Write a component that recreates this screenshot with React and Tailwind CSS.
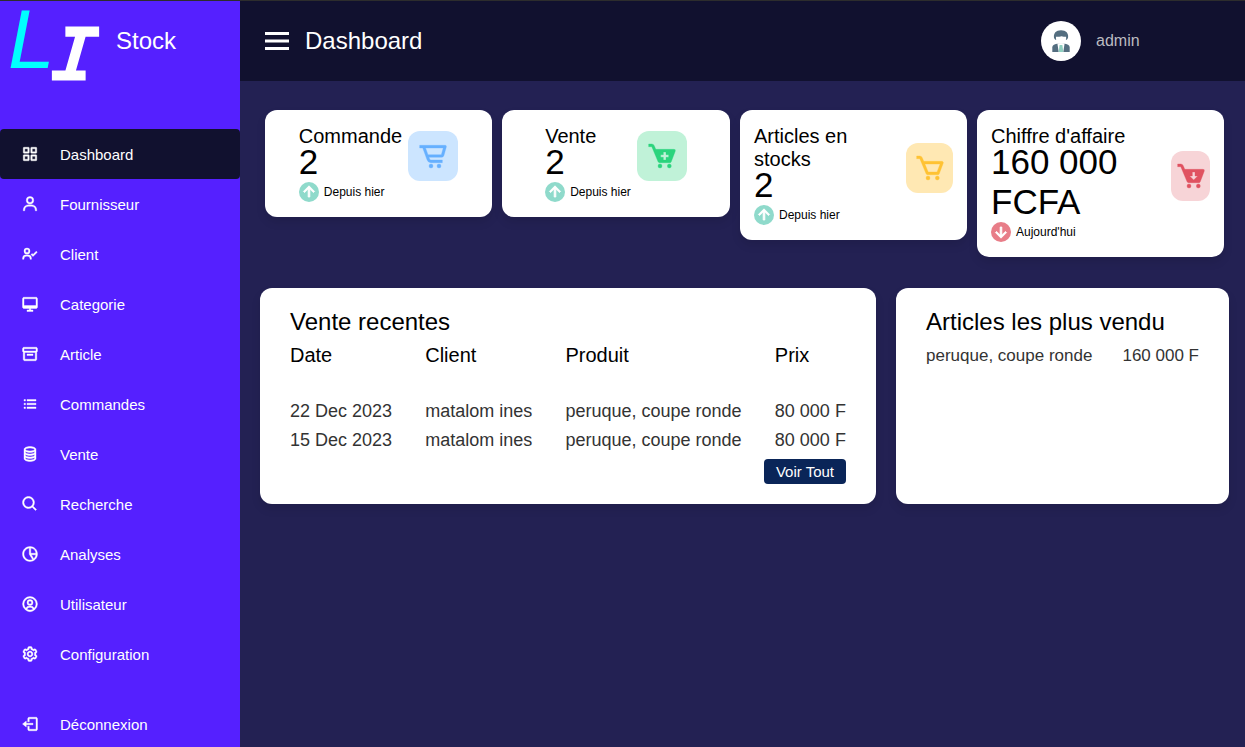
import {
  BiGridAlt, BiUser, BiUserCheck, BiDesktop, BiListUl, BiCoinStack, BiSearch,
  BiPieChartAlt2, BiUserCircle, BiCog, BiLogOut, BiItalic, BiMenu, BiCartAlt, BiCart,
  BiSolidCartAdd, BiSolidCartDownload, BiUpArrowAlt, BiDownArrowAlt,
} from "react-icons/bi";

function BoxIcon({ size, strokeWidth }) {
  return (
    <svg width={size} height={size} viewBox="0 0 24 24" fill="currentColor" stroke="currentColor" strokeWidth={strokeWidth} aria-hidden="true">
      <path d="M20 3H4c-1.103 0-2 .897-2 2v3c0 .736.405 1.375 1 1.722V19c0 1.103.897 2 2 2h14c1.103 0 2-.897 2-2V9.722c.595-.347 1-.986 1-1.722V5c0-1.103-.897-2-2-2zM4 5h16l.002 3H4V5zm1 14v-9h14v9H5z" />
      <path d="M8 12h8v2H8z" />
    </svg>
  );
}

const NAV = [
  { label: "Dashboard", Icon: BiGridAlt, active: true },
  { label: "Fournisseur", Icon: BiUser },
  { label: "Client", Icon: BiUserCheck },
  { label: "Categorie", Icon: BiDesktop },
  { label: "Article", Icon: BoxIcon },
  { label: "Commandes", Icon: BiListUl },
  { label: "Vente", Icon: BiCoinStack },
  { label: "Recherche", Icon: BiSearch },
  { label: "Analyses", Icon: BiPieChartAlt2 },
  { label: "Utilisateur", Icon: BiUserCircle },
  { label: "Configuration", Icon: BiCog },
];

const STATS = [
  { title: "Commande", value: "2", note: "Depuis hier", Icon: BiCartAlt, tone: "bg-[#cce5ff] text-[#66b0ff]" },
  { title: "Vente", value: "2", note: "Depuis hier", Icon: BiSolidCartAdd, tone: "bg-[#c0f2d8] text-[#2bd47d]" },
  { title: "Articles en stocks", value: "2", note: "Depuis hier", Icon: BiCart, tone: "bg-[#ffe8b3] text-[#ffc233]" },
  { title: "Chiffre d'affaire", value: "160 000 FCFA", note: "Aujourd'hui", Icon: BiSolidCartDownload, tone: "bg-[#f7d4d7] text-[#e05260]", down: true },
];

const SALES = [
  ["22 Dec 2023", "matalom ines", "peruque, coupe ronde", "80 000 F"],
  ["15 Dec 2023", "matalom ines", "peruque, coupe ronde", "80 000 F"],
];

function NavLink({ label, Icon, active }) {
  return (
    <a
      href="#"
      className={`flex h-[50px] items-center text-[15px] text-white ${active ? "rounded-[4px] bg-[#11112f]" : ""}`}
    >
      <span className="flex w-[60px] shrink-0 justify-center">
        <Icon size={18} strokeWidth={0.5} />
      </span>
      <span className="pt-0.5">{label}</span>
    </a>
  );
}

function Sidebar() {
  return (
    <aside className="h-full w-60 shrink-0 overflow-hidden bg-[#5520ff]">
      <div className="relative flex h-20 items-center pl-[116px]">
        <span className="absolute top-0 left-2 text-[84px] leading-[76px] text-[#00ffff] italic">L</span>
        <BiItalic size={81} className="absolute top-3 left-[35px] text-white" />
        <span className="text-2xl text-white">Stock</span>
      </div>
      <nav className="mt-12">
        {NAV.map((item) => (
          <NavLink key={item.label} {...item} />
        ))}
        <div className="mt-5">
          <NavLink label="Déconnexion" Icon={BiLogOut} />
        </div>
      </nav>
    </aside>
  );
}

function Avatar() {
  return (
    <svg viewBox="0 0 40 40" className="size-10 shrink-0" role="img" aria-label="admin">
      <circle cx="20" cy="20" r="20" fill="#fff" />
      <path d="M11.300 31v-4.400c0-2.200 1.800-3.200 4.700-3.800h8c2.900.6 4.700 1.600 4.700 3.800V31z" fill="#546e80" />
      <path d="M16.4 22.500h7.200l-1.300 8.500h-4.600z" fill="#fff" />
      <path d="M18.600 24h2.800l.9 7h-4.600z" fill="#8fd0c0" />
      <path d="M13 17c-.8-4.700 2-7.700 7-7.700s7.800 3 7 7.700l-1.200 1.800H14.200z" fill="#546e80" />
      <path d="M15 15.800c2.600-.1 4.300-.2 5.600-.6 1.400.4 2.700.6 4.500.6.4 4-1.800 6.900-5.100 6.900s-5.400-2.900-5-6.900z" fill="#fff" />
    </svg>
  );
}

function Header() {
  return (
    <header className="flex h-20 shrink-0 items-center justify-between bg-[#11112f] pr-5 pl-[19px]">
      <div className="flex items-center gap-[10px] text-white">
        <button type="button" aria-label="Menu">
          <BiMenu size={36} />
        </button>
        <h1 className="text-2xl">Dashboard</h1>
      </div>
      <div className="flex w-[184px] items-center gap-[15px]">
        <Avatar />
        <span className="text-base text-[#bbbbc0]">admin</span>
      </div>
    </header>
  );
}

function StatCard({ title, value, note, Icon, tone, down }) {
  return (
    <section className="flex items-center justify-center rounded-xl bg-white px-[14px] py-[15px] shadow-[0_5px_10px_rgba(0,0,0,0.1)]">
      <div>
        <h2 className="text-xl leading-[23px]">{title}</h2>
        <p className="-mt-[6px] text-[35px] leading-10">{value}</p>
        <div className="flex items-center gap-[5px]">
          <span className={`flex size-5 items-center justify-center rounded-full text-white ${down ? "bg-[#e87d88]" : "bg-[#8fdacb]"}`}>
            {down ? <BiDownArrowAlt size={20} strokeWidth={1} /> : <BiUpArrowAlt size={20} strokeWidth={1} />}
          </span>
          <span className="text-xs">{note}</span>
        </div>
      </div>
      <span className={`mb-[15px] ml-[6px] flex h-[50px] w-[50px] min-w-0 items-center justify-center rounded-xl ${tone}`}>
        <Icon size={32} strokeWidth={0.25} className="shrink-0" />
      </span>
    </section>
  );
}

export default function App() {
  return (
    <div className="flex h-screen flex-col overflow-hidden border-t border-[#2d2d2d] bg-[#232153] font-['Liberation_Sans',Arial,sans-serif] text-black">
      <div className="flex min-h-0 flex-1">
        <Sidebar />
        <div className="flex min-w-0 flex-1 flex-col">
          <Header />
          <main className="pt-[29px] pr-4 pl-5">
            <div className="grid grid-cols-[227fr_228fr_227fr_247fr] items-start gap-[10px] px-[5px]">
              {STATS.map((s) => (
                <StatCard key={s.title} {...s} />
              ))}
            </div>
            <div className="mt-[31px] grid grid-cols-[616fr_333fr] gap-5">
              <section className="rounded-xl bg-white px-[30px] py-5 shadow-[0_5px_10px_rgba(0,0,0,0.1)]">
                <h2 className="text-2xl leading-7">Vente recentes</h2>
                <table className="mt-1 w-full text-left text-lg leading-[29px] whitespace-nowrap">
                  <thead>
                    <tr className="h-[57px] align-top text-xl leading-[30px]">
                      <th className="p-0 font-normal">Date</th>
                      <th className="p-0 font-normal">Client</th>
                      <th className="p-0 font-normal">Produit</th>
                      <th className="p-0 font-normal">Prix</th>
                    </tr>
                  </thead>
                  <tbody className="text-[#333333]">
                    {SALES.map((row) => (
                      <tr key={row[0]}>
                        {row.map((cell) => (
                          <td key={cell} className="p-0 pr-[33px] last:pr-0">{cell}</td>
                        ))}
                      </tr>
                    ))}
                  </tbody>
                </table>
                <div className="mt-1 flex justify-end">
                  <a href="#" className="flex h-[25px] items-center rounded-[4px] bg-[#0a2558] px-3 pt-px text-[15px] text-white">
                    Voir Tout
                  </a>
                </div>
              </section>
              <section className="rounded-xl bg-white px-[30px] py-5 shadow-[0_5px_10px_rgba(0,0,0,0.1)]">
                <h2 className="text-2xl leading-7">Articles les plus vendu</h2>
                <ul className="mt-1">
                  <li className="flex justify-between text-[17px] leading-8 whitespace-nowrap text-[#333333]">
                    <span>peruque, coupe ronde</span>
                    <span>160 000 F</span>
                  </li>
                </ul>
              </section>
            </div>
          </main>
        </div>
      </div>
    </div>
  );
}
